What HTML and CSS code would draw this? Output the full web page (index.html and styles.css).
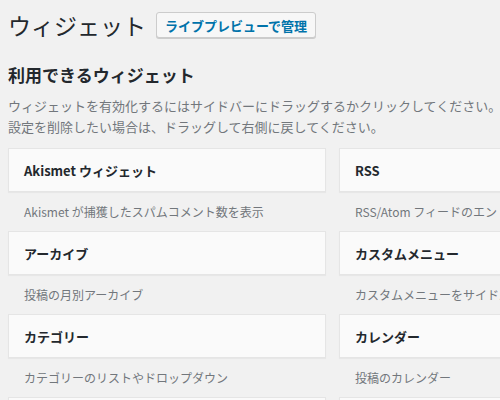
FILE: index.html
```html
<!DOCTYPE html>
<html lang="ja">
<head>
<meta charset="utf-8">
<title>ウィジェット</title>
<link rel="stylesheet" href="styles.css">
</head>
<body>
<div class="wrap">
  <div class="page-head">
    <h1 class="page-title">ウィジェット</h1>
    <a class="title-action" href="#">ライブプレビューで管理</a>
  </div>
  <h2 class="section-title">利用できるウィジェット</h2>
  <p class="section-desc">ウィジェットを有効化するにはサイドバーにドラッグするかクリックしてください。<br>設定を削除したい場合は、ドラッグして右側に戻してください。</p>
  <div class="widget-list">
    <div class="widget">
      <div class="widget-top"><h3 class="widget-name">Akismet ウィジェット</h3></div>
      <div class="widget-desc">Akismet が捕獲したスパムコメント数を表示</div>
    </div>
    <div class="widget">
      <div class="widget-top"><h3 class="widget-name">RSS</h3></div>
      <div class="widget-desc">RSS/Atom フィードのエントリー</div>
    </div>
    <div class="widget">
      <div class="widget-top"><h3 class="widget-name">アーカイブ</h3></div>
      <div class="widget-desc">投稿の月別アーカイブ</div>
    </div>
    <div class="widget">
      <div class="widget-top"><h3 class="widget-name">カスタムメニュー</h3></div>
      <div class="widget-desc">カスタムメニューをサイドバーに追加します。</div>
    </div>
    <div class="widget">
      <div class="widget-top"><h3 class="widget-name">カテゴリー</h3></div>
      <div class="widget-desc">カテゴリーのリストやドロップダウン</div>
    </div>
    <div class="widget">
      <div class="widget-top"><h3 class="widget-name">カレンダー</h3></div>
      <div class="widget-desc">投稿のカレンダー</div>
    </div>
    <div class="widget">
      <div class="widget-top"><h3 class="widget-name">ギャラリー</h3></div>
      <div class="widget-desc">画像ギャラリーを表示します。</div>
    </div>
    <div class="widget">
      <div class="widget-top"><h3 class="widget-name">タグクラウド</h3></div>
      <div class="widget-desc">よく使われているタグのクラウド</div>
    </div>
  </div>
</div>
</body>
</html>
```
FILE: styles.css
```css
html, body {
  margin: 0;
  padding: 0;
  background: #f1f1f1;
  overflow: hidden;
}
body {
  font-family: "Noto Sans CJK JP", "Noto Sans", sans-serif;
  font-size: 13px;
  color: #23282d;
}
.wrap {
  padding: 10px 0 0 8px;
  width: 700px;
}
.page-head {
  display: flex;
  align-items: center;
  gap: 10px;
  height: 30px;
}
.page-title {
  margin: 0;
  font-size: 23px;
  font-weight: 400;
  line-height: 30px;
  color: #23282d;
}
.title-action {
  display: flex;
  align-items: center;
  box-sizing: border-box;
  height: 26px;
  width: 160px;
  justify-content: center;
  border: 1px solid #ccc;
  border-radius: 3px;
  background: #f7f7f7;
  box-shadow: 0 1px 0 #ccc;
  color: #0073aa;
  font-size: 13px;
  font-weight: 700;
  text-decoration: none;
}
.section-title {
  margin: 23px 0 8px;
  font-size: 17px;
  line-height: 24px;
  font-weight: 700;
  color: #23282d;
}
.section-desc {
  margin: 0 0 11px;
  font-size: 13px;
  line-height: 21px;
  color: #72777c;
  white-space: nowrap;
}
.widget-list {
  display: grid;
  grid-template-columns: 318px 318px;
  column-gap: 13px;
}
.widget-top {
  box-sizing: border-box;
  height: 44px;
  display: flex;
  align-items: center;
  padding: 0 15px;
  background: #fafafa;
  border: 1px solid #e5e5e5;
  box-shadow: 0 1px 1px rgba(0, 0, 0, 0.04);
}
.widget-name {
  margin: 0;
  font-size: 13px;
  font-weight: 700;
  color: #23282d;
  white-space: nowrap;
}
.widget-desc {
  height: 39px;
  line-height: 39px;
  padding-left: 16px;
  font-size: 12px;
  color: #72777c;
  white-space: nowrap;
}
```
